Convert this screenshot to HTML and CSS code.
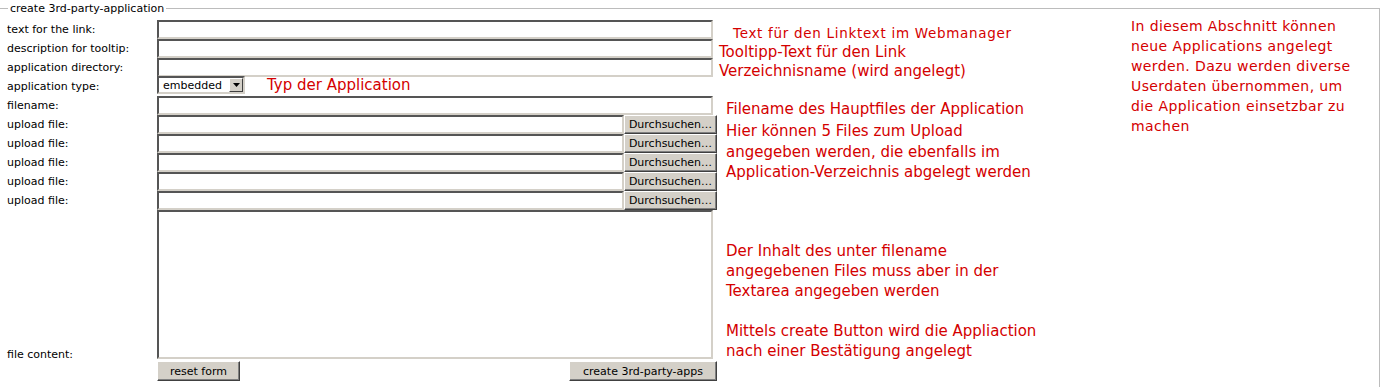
FILE: index.html
```html
<!DOCTYPE html>
<html lang="de">

<head>
    <meta charset="UTF-8">
    <title>create 3rd-party-application</title>
    <link rel="stylesheet" href="styles.css">
</head>

<body>
    <fieldset class="box">
        <legend>create 3rd-party-application</legend>
        <div class="layout">
            <form class="form">
                <label class="lbl">text for the link:</label>
                <input class="field" type="text">
                <span class="hint hint-link">Text für den Linktext im Webmanager</span>

                <label class="lbl">description for tooltip:</label>
                <input class="field" type="text">
                <span class="hint hint-near">Tooltipp-Text für den Link</span>

                <label class="lbl">application directory:</label>
                <input class="field" type="text">
                <span class="hint hint-near">Verzeichnisname (wird angelegt)</span>

                <label class="lbl">application type:</label>
                <div class="type-cell">
                    <span class="select-wrap">
                        <select class="select">
                            <option>embedded</option>
                            <option>extern</option>
                        </select>
                        <span class="select-arrow">
                            <svg width="7" height="4" viewBox="0 0 7 4"><path d="M0 0h7L3.5 4z" fill="#000"/></svg>
                        </span>
                    </span>
                    <span class="hint hint-type">Typ der Application</span>
                </div>

                <label class="lbl">filename:</label>
                <input class="field" type="text">
                <span class="hint">Filename des Hauptfiles der Application</span>

                <label class="lbl">upload file:</label>
                <div class="upload"><input class="field file" type="text"><button type="button" class="btn browse">Durchsuchen…</button></div>
                <span class="hint hint-upload">Hier können 5 Files zum Upload<br>angegeben werden, die ebenfalls im<br>Application-Verzeichnis abgelegt werden</span>

                <label class="lbl">upload file:</label>
                <div class="upload"><input class="field file" type="text"><button type="button" class="btn browse">Durchsuchen…</button></div>

                <label class="lbl">upload file:</label>
                <div class="upload"><input class="field file" type="text"><button type="button" class="btn browse">Durchsuchen…</button></div>

                <label class="lbl">upload file:</label>
                <div class="upload"><input class="field file" type="text"><button type="button" class="btn browse">Durchsuchen…</button></div>

                <label class="lbl">upload file:</label>
                <div class="upload"><input class="field file" type="text"><button type="button" class="btn browse">Durchsuchen…</button></div>

                <label class="lbl lbl-bottom">file content:</label>
                <textarea class="content"></textarea>
                <span class="hint hint-content">Der Inhalt des unter filename<br>angegebenen Files muss aber in der<br>Textarea angegeben werden<br><br>Mittels create Button wird die Appliaction<br>nach einer Bestätigung angelegt</span>

                <div class="actions">
                    <button type="reset" class="btn reset">reset form</button>
                    <button type="button" class="btn create">create 3rd-party-apps</button>
                </div>
            </form>
            <p class="info">In diesem Abschnitt können neue Applications angelegt werden. Dazu werden diverse Userdaten übernommen, um die Application einsetzbar zu machen</p>
        </div>
    </fieldset>
</body>

</html>
```

FILE: styles.css
```css
* {
    box-sizing: border-box;
}

body {
    margin: 0;
    background-color: #fff;
    font-family: "DejaVu Sans", Verdana, sans-serif;
    font-size: 11px;
    color: #000;
}

.box {
    margin: 2px 4px 0 -1px;
    padding: 0 0 10px 7px;
    border: 1px solid #bcbcbc;
    min-height: 400px;
}

.box legend {
    margin-left: 1px;
    padding: 0 2px;
    font-size: 11px;
    line-height: 13px;
}

.layout {
    display: flex;
    align-items: flex-start;
}

.form {
    flex: 0 0 1124px;
    display: grid;
    grid-template-columns: 150px 560px 1fr;
    grid-template-rows: repeat(10, 19px) 150px 21px;
    margin: 0;
    padding-top: 5px;
}

.lbl {
    line-height: 19px;
    white-space: nowrap;
}

.lbl-bottom {
    align-self: end;
    line-height: 14px;
    margin-bottom: -2px;
}

.field {
    width: 556px;
    height: 19px;
    margin: 0;
    padding: 0 2px;
    border: 2px solid;
    border-color: #555 #d4d0c8 #d4d0c8 #555;
    background-color: #fff;
    font: 11px "DejaVu Sans", sans-serif;
}

.upload {
    display: flex;
}

.field.file {
    width: 467px;
}

.btn {
    height: 19px;
    margin: 0;
    padding: 0;
    border: 1px solid;
    border-color: #fff #404040 #404040 #fff;
    box-shadow: inset -1px -1px #808080;
    background-color: #d4d0c8;
    font-family: "DejaVu Sans", sans-serif;
    font-size: 11px;
    color: #000;
    cursor: pointer;
}

.browse {
    width: 93px;
}

.type-cell {
    grid-column: 2 / 4;
    display: flex;
    align-items: flex-start;
}

.select-wrap {
    position: relative;
    display: inline-block;
    margin-top: -1px;
}

.select {
    appearance: none;
    width: 88px;
    height: 18px;
    margin: 0;
    padding: 0 0 0 4px;
    border: 2px solid;
    border-color: #555 #d4d0c8 #d4d0c8 #555;
    border-radius: 0;
    background-color: #fff;
    font-family: "DejaVu Sans", sans-serif;
    font-size: 11px;
    color: #000;
}

.select-arrow {
    position: absolute;
    top: 2px;
    right: 2px;
    width: 14px;
    height: 14px;
    display: flex;
    align-items: center;
    justify-content: center;
    border: 1px solid;
    border-color: #fff #404040 #404040 #fff;
    background-color: #d4d0c8;
    pointer-events: none;
}

.hint {
    padding-left: 9px;
    padding-top: 4px;
    color: #d40000;
    font-size: 15px;
    line-height: 19px;
    white-space: nowrap;
}

.hint-link {
    padding-left: 16px;
    font-size: 13.5px;
    letter-spacing: 0.7px;
}

.hint-near {
    padding-left: 2px;
}

.hint-type {
    padding: 0 0 0 22px;
    line-height: 17px;
}

.hint-upload {
    grid-row: span 5;
    padding-top: 6px;
    line-height: 20.5px;
}

.content {
    width: 556px;
    height: 149px;
    margin: 0;
    border: 2px solid;
    border-color: #555 #d4d0c8 #d4d0c8 #555;
    resize: none;
}

.hint-content {
    align-self: end;
    padding-top: 0;
    margin-bottom: -1px;
    line-height: 20px;
}

.actions {
    grid-column: 2;
    display: flex;
    justify-content: space-between;
    align-items: flex-end;
}

.reset {
    width: 83px;
    height: 20px;
}

.create {
    width: 148px;
    height: 20px;
}

.info {
    margin: 1px 0 0;
    width: 234px;
    color: #d40000;
    font-size: 14px;
    letter-spacing: 0.4px;
    line-height: 20px;
}
```
